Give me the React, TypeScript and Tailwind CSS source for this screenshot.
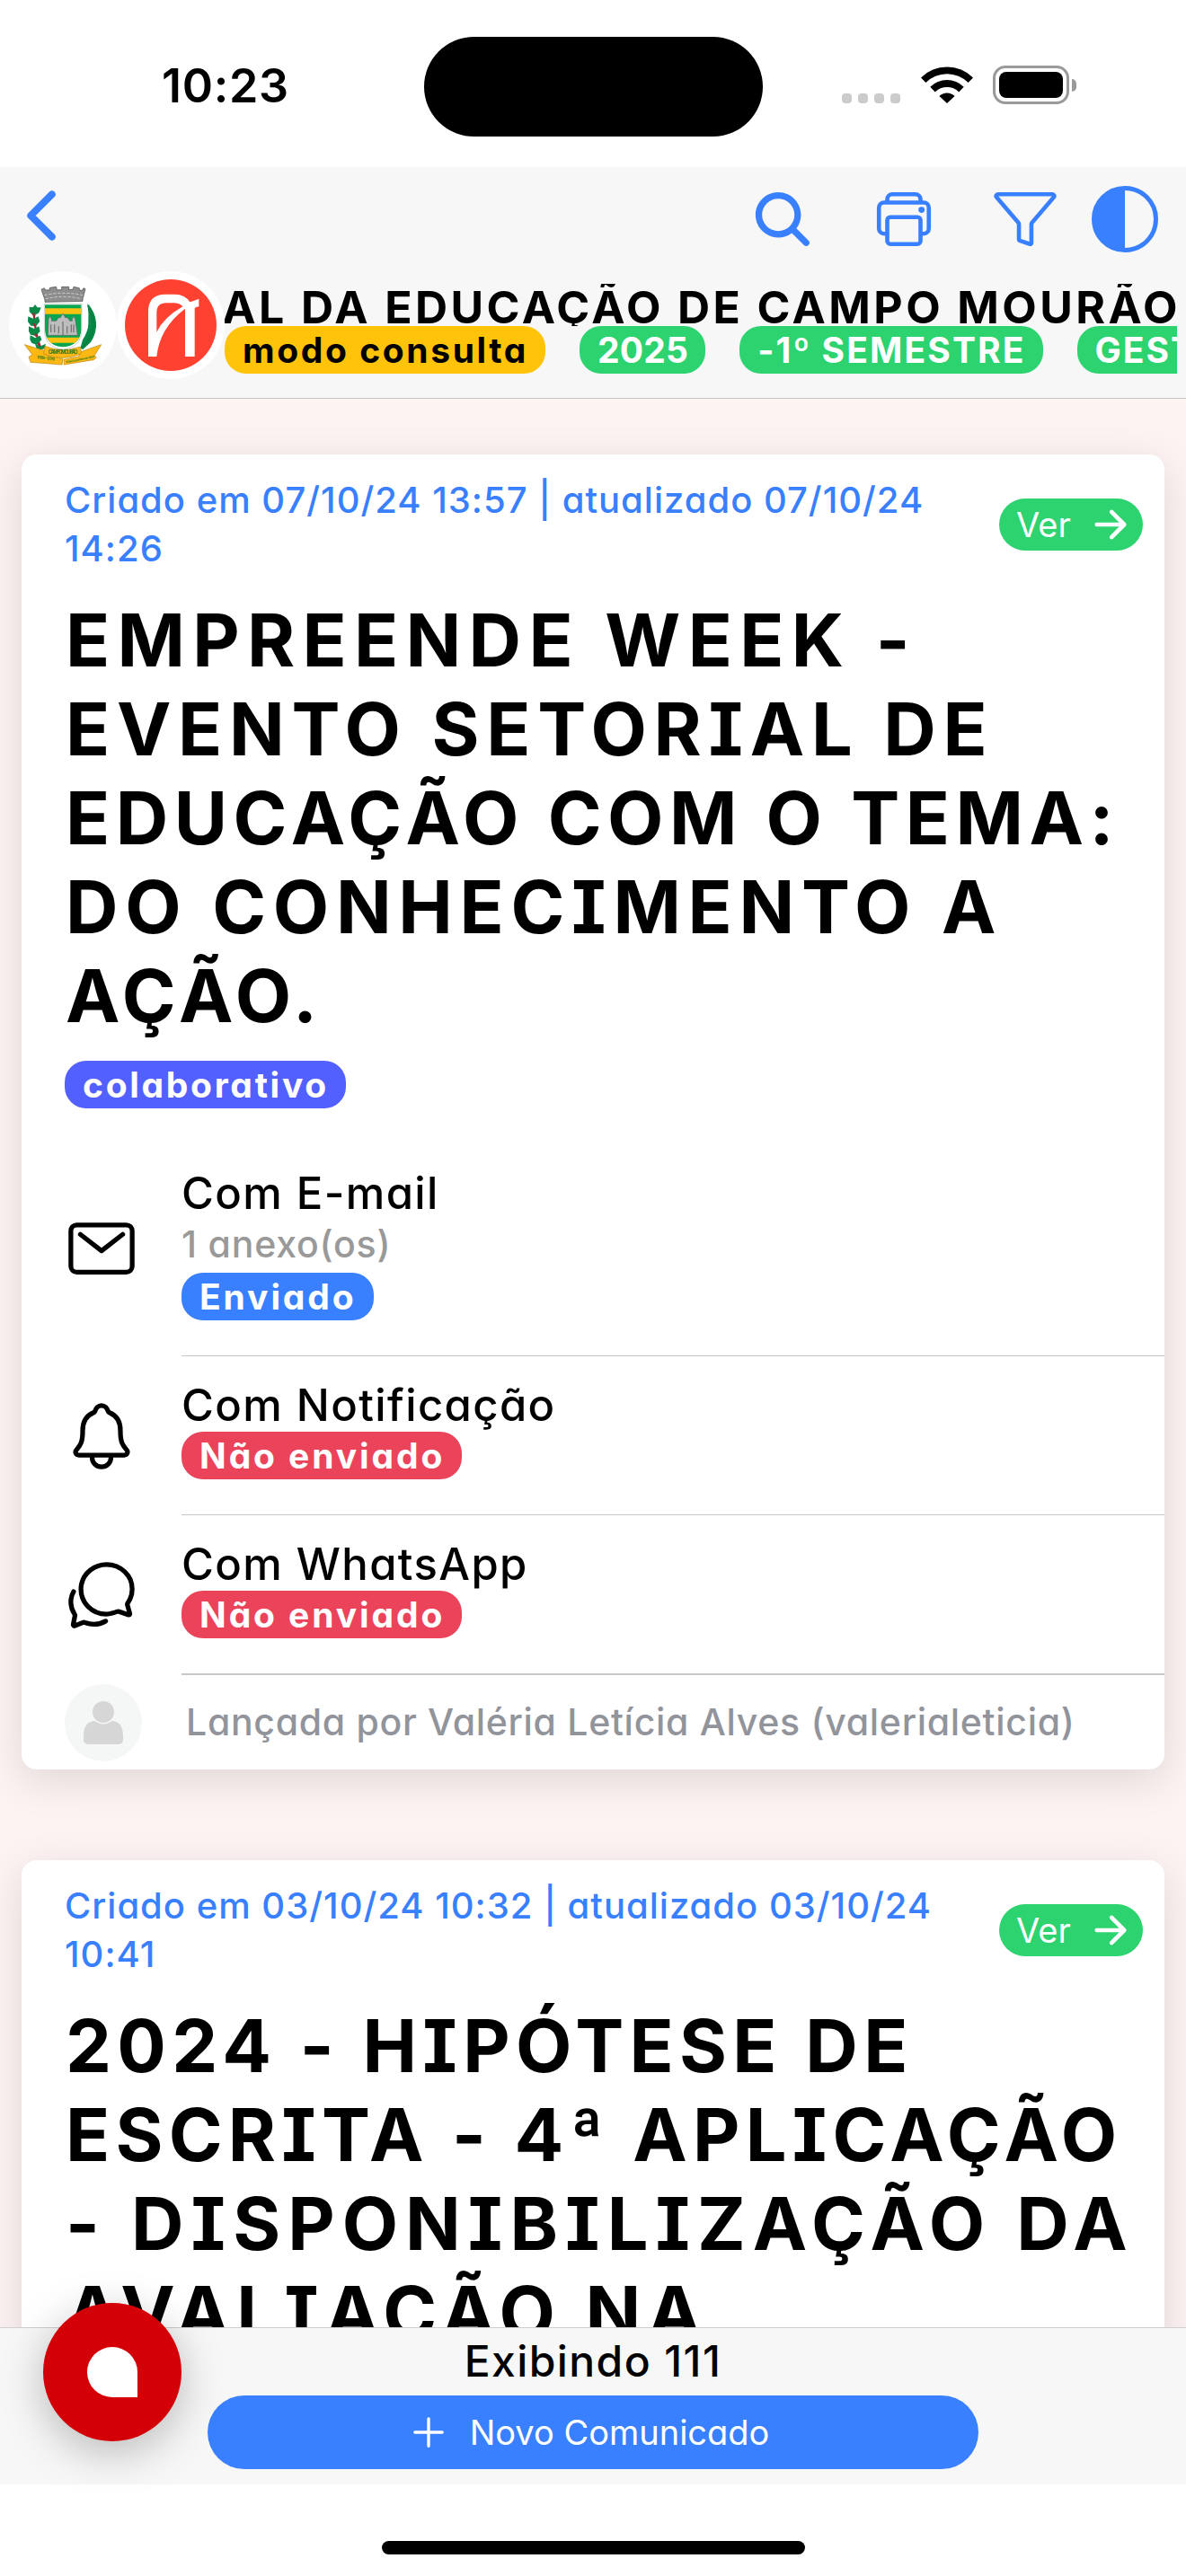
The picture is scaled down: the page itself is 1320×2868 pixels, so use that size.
import { ReactNode } from "react";
import {
	IoAdd,
	IoArrowForward,
	IoChatbubblesOutline,
	IoChevronBack,
	IoFunnelOutline,
	IoMailOutline,
	IoNotificationsOutline,
	IoPrintOutline,
	IoSearch,
} from "react-icons/io5";

type TitleLine = { text: string; spacing: string };

const channels = [
	{ icon: <IoMailOutline size={84} />, title: "Com E-mail", note: "1 anexo(os)", status: "Enviado", sent: true },
	{ icon: <IoNotificationsOutline size={84} />, title: "Com Notificação", note: "", status: "Não enviado", sent: false },
	{ icon: <IoChatbubblesOutline size={84} />, title: "Com WhatsApp", note: "", status: "Não enviado", sent: false },
];

const firstTitle = [
	{ text: "EMPREENDE WEEK -", spacing: "tracking-[8.3px]" },
	{ text: "EVENTO SETORIAL DE", spacing: "tracking-[7.7px]" },
	{ text: "EDUCAÇÃO COM O TEMA:", spacing: "tracking-[6.5px]" },
	{ text: "DO CONHECIMENTO A", spacing: "tracking-[7.7px]" },
	{ text: "AÇÃO.", spacing: "tracking-[5.6px]" },
];

const secondTitle = [
	{ text: "2024 - HIPÓTESE DE", spacing: "tracking-[6.3px]" },
	{ text: "ESCRITA - 4ª APLICAÇÃO", spacing: "tracking-[6.2px]" },
	{ text: "- DISPONIBILIZAÇÃO DA", spacing: "tracking-[8px]" },
	{ text: "AVALIAÇÃO NA", spacing: "tracking-[7.2px]" },
];

function StatusBar() {
	return (
		<div className="flex h-[186px] shrink-0 bg-white">
			<div className="w-[472px] pt-[66px] pl-[180px] text-[52px] leading-[60px] font-semibold tracking-[0.7px]">10:23</div>
			<div className="mt-[41px] h-[111px] w-[377px] rounded-full bg-black" />
			<div className="flex flex-1 pt-[73px] pl-[88px]">
				<div className="mt-[31px] flex h-[11px] gap-[7px]">
					<i className="w-[11px] rounded-[4px] bg-[#cbcbcb]" />
					<i className="w-[11px] rounded-[4px] bg-[#cbcbcb]" />
					<i className="w-[11px] rounded-[4px] bg-[#cbcbcb]" />
					<i className="w-[11px] rounded-[4px] bg-[#cbcbcb]" />
				</div>
				<svg className="ml-[23px]" width="58" height="42" viewBox="0 0 58 42">
					<path d="M0 13.500a41 41 0 0 1 58 0l-5.400 5.600a33.300 33.300 0 0 0-47.200 0z" />
					<path d="M10.300 23.800a26.500 26.500 0 0 1 37.400 0l-5.500 5.600a18.700 18.700 0 0 0-26.400 0z" />
					<path d="M20.400 34a12.200 12.200 0 0 1 17.200 0L29 42z" />
				</svg>
				<div className="ml-[22px] h-[43px] w-[85px] rounded-[14px] border-[3px] border-[#9a9a9a] p-[4px]">
					<div className="h-full rounded-[8px] bg-black" />
				</div>
				<div className="mt-[15px] ml-[3px] h-[14px] w-[5px] rounded-r-full bg-[#9a9a9a]" />
			</div>
		</div>
	);
}

function Crest() {
	return (
		<svg width="120" height="120" viewBox="0 0 360 360">
			<circle cx="180" cy="180" r="180" fill="#fff" />
			<path d="M108 61l10-5 4 7 14-1v-7l22-3 2 10h16V52h24v9h13l3-9 19 4v7l9 1 5-8 6 3-9 34v7l-126 3v-7z" fill="#8d8d8d" stroke="#444" strokeWidth="2" />
			<path d="M118 80q66-14 128 0M122 92q60-14 120 0" fill="none" stroke="#ccc" strokeWidth="3" strokeDasharray="10 5" />
			<path d="M118 108h125v85q0 62-63 68-62-6-62-68z" fill="#fff" stroke="#777" />
			<path d="M120 112h121v79q0 56-61 62-60-6-60-62z" fill="#07a651" />
			<path d="M120 124h121v19H120zM125 221h110l-14 18h-82z" fill="#ffc20e" />
			<path d="M132 160l5-10 5 10v6h16l7-11 7 0 8-14 8 14 8 0 7 11h8v-6l5-10 5 10 8 54H130z" fill="#bdbdbd" stroke="#666" strokeWidth="2" />
			<path d="M140 178v26m12-26v26m14-20v24m14-40v46m14-30v24m14-30v26m8-26v26" stroke="#777" strokeWidth="4" />
			<path d="M82 120q2 76 24 140" stroke="#9d2a35" strokeWidth="7" fill="none" />
			<g fill="#078a48">
				<path d="M68 119l12 2 7-10 8 10 12 0-7 18-18 10-14-14zM64 151l18 8 16-8 5 16-12 16-18-1-10-14zM66 184l18 8 16-8 4 16-14 16-18-4-6-12zM71 214l17 9 16-8 5 14-16 16-17-5-6-12zM87 242l19 8 17-8-5 17-12 3-14-4z" />
				<path d="M262 108q26 28 29 62t-18 67l-26 24-9-4 8-28q18-28 19-52 2-38-3-69z" />
			</g>
			<path d="M80 140l6 10m-4 24l5 10m0 24l5 10m4 22l8 10" fill="none" stroke="#9d2a35" strokeWidth="7" />
			<path d="M264 114q44 76-20 140" fill="none" stroke="#067a3e" strokeWidth="8" strokeDasharray="3 3" />
			<g fill="#fdb813" stroke="#b98512" strokeWidth="2">
				<path d="M52 245l72 22 2 14 54 12-3 19-105-8-6-18 12-7z" />
				<path d="M308 245l-68 24-8 16-49 10 1 17 98-16 10-7-6-8z" />
				<path d="M120 250q60 24 118 2l4 23q-62 28-126 1z" />
			</g>
			<text x="180" y="277" textAnchor="middle" fontSize="17" fontWeight="700" fill="#3a7d1e" textLength="98">CAMPO MOURÃO</text>
			<text x="92" y="291" fontSize="14" fontWeight="700" fill="#3a7d1e" textLength="60" transform="rotate(8 92 291)">1769 - 1779</text>
			<text x="190" y="307" fontSize="10" fontWeight="700" fill="#3a7d1e" textLength="98" transform="rotate(-11 190 307)">10 de Dezembro de 1947</text>
		</svg>
	);
}

function AppLogo() {
	return (
		<svg width="120" height="120" viewBox="0 0 360 360">
			<circle cx="180" cy="180" r="180" fill="#fff" />
			<circle cx="180" cy="180" r="153" fill="#ff4132" />
			<path d="M105 285h28q10-96 95-160v160h32V124q2-4 14-6V92l-18 7-12 4q-16-26-50-26h-32q-57 0-57 58zM133 203v-64q0-33 32-33h24q22 0 31 12-63 36-87 85z" fill="#fff" fillRule="evenodd" />
		</svg>
	);
}

function Badge({ color, spacing = "tracking-[2.9px]", children }: { color: string; spacing?: string; children: ReactNode }) {
	return (
		<span className={"flex h-[53px] w-fit shrink-0 items-center rounded-[24px] pr-[19px] pl-[20px] text-[39px] leading-none font-bold whitespace-nowrap " + color + " " + spacing}>
			{children}
		</span>
	);
}

function Header() {
	return (
		<div className="h-[258px] shrink-0 border-b border-[#c4c4c6] bg-[#f7f7f7]">
			<div className="flex h-[116px] items-center text-[#3880ff]">
				<IoChevronBack className="mt-[-8px] ml-[4px]" size={84} />
				<div className="ml-auto flex items-center gap-[61px] pr-[31px]">
					<IoSearch size={74} />
					<IoPrintOutline size={74} />
					<div className="flex items-center gap-[37px]">
						<IoFunnelOutline size={74} />
						<svg width="74" height="74" viewBox="0 0 74 74">
							<circle cx="37" cy="37" r="34.500" fill="none" stroke="currentColor" strokeWidth="5" />
							<path d="M37 1a36 36 0 0 0 0 72z" fill="currentColor" />
						</svg>
					</div>
				</div>
			</div>
			<div className="flex pl-[10px]">
				<Crest />
				<AppLogo />
				<div className="mt-[14px] w-[1060px] overflow-hidden">
					<div className="flex h-[47px] justify-end overflow-hidden text-[50px] leading-[52px] font-bold tracking-[3.4px] whitespace-nowrap">
						<span className="mr-[-4px]">CENTRAL DA EDUCAÇÃO DE CAMPO MOURÃO</span>
					</div>
					<div className="flex gap-[38px] text-white">
						<Badge color="bg-[#ffc409] text-black" spacing="tracking-[2.6px]">modo consulta</Badge>
						<Badge color="bg-[#2dd36f]" spacing="tracking-[0.2px]">2025</Badge>
						<Badge color="bg-[#2dd36f]" spacing="tracking-[2.1px]">-1º SEMESTRE</Badge>
						<Badge color="bg-[#2dd36f]" spacing="tracking-[2px]">GESTÃO</Badge>
					</div>
				</div>
			</div>
		</div>
	);
}

function CardTop({ created, title }: { created: string[]; title: TitleLine[] }) {
	return (
		<>
			<div className="flex items-center justify-between pt-[24px] pr-[24px] pl-[48px]">
				<p className="text-[40px] leading-[54px] font-[450] tracking-[1px] whitespace-pre text-[#3880ff]">{created.join("\n")}</p>
				<button className="flex h-[58px] w-[160px] items-center justify-between rounded-full bg-[#2dd36f] pr-[11px] pl-[19px] text-[38px] text-white">
					Ver
					<IoArrowForward size={50} />
				</button>
			</div>
			<h2 className="mt-[26px] pl-[49px] text-[81px] leading-[99px] font-bold whitespace-nowrap">
				{title.map((line) => (
					<span className={"block " + line.spacing} key={line.text}>{line.text}</span>
				))}
			</h2>
		</>
	);
}

function Channels() {
	return channels.map((channel, i) => (
		<div className="flex items-center pl-[47px]" key={channel.title}>
			<div className="w-[131px]">{channel.icon}</div>
			<div className={(channel.note ? "pt-[29px] " : "pt-[25px] ") + (i === 2 ? "border-b-2 " : "border-b ") + "flex-1 border-[#c8c7cc] pb-[39px]"}>
				<p className="h-[59px] text-[49px] leading-[60px] font-[450] tracking-[1.4px]">{channel.title}</p>
				{channel.note && <p className="mb-[4px] text-[41px] leading-[55px] font-[450] tracking-[0.8px] text-[#999999]">{channel.note}</p>}
				<Badge color={channel.sent ? "bg-[#3880ff] text-white" : "bg-[#eb445a] text-white"}>{channel.status}</Badge>
			</div>
		</div>
	));
}

function Author() {
	return (
		<div className="flex h-[105px] items-center pl-[48px] text-[41px] font-[450] tracking-[0.7px] text-[#92949c]">
			<svg className="mr-[49px]" width="86" height="86" viewBox="0 0 86 86">
				<circle cx="43" cy="43" r="43" fill="#f5f7f6" />
				<circle cx="43" cy="31" r="12" fill="#d6d6d6" />
				<path d="M33 41q10 7 20 0 12 1 12 17v4q0 5-6 5H27q-6 0-6-5v-4q0-16 12-17z" fill="#d6d6d6" />
			</svg>
			Lançada por Valéria Letícia Alves (valerialeticia)
		</div>
	);
}

export default function App() {
	return (
		<div className="relative flex h-[2868px] w-[1320px] flex-col overflow-hidden bg-white font-['Inter',sans-serif] text-black [font-feature-settings:'cv11','cv08']">
			<StatusBar />
			<Header />
			<div className="h-[2147px] overflow-hidden bg-[#fdf3f2] px-[24px] pt-[62px]">
				<div className="h-[1464px] rounded-[17px] bg-white shadow-[0_12px_48px_rgba(0,0,0,0.12)]">
					<CardTop created={["Criado em 07/10/24 13:57 | atualizado 07/10/24", "14:26"]} title={firstTitle} />
					<div className="mt-[22px] mb-[36px] pl-[48px]">
						<Badge color="bg-[#5260ff] text-white" spacing="tracking-[2.7px]">colaborativo</Badge>
					</div>
					<Channels />
					<Author />
				</div>
				<div className="mt-[101px] h-[1464px] rounded-[17px] bg-white shadow-[0_12px_48px_rgba(0,0,0,0.12)]">
					<CardTop created={["Criado em 03/10/24 10:32 | atualizado 03/10/24", "10:41"]} title={secondTitle} />
				</div>
			</div>
			<div className="flex h-[175px] flex-col items-center border-t border-[#cfcfd0] bg-[#f7f7f7]">
				<p className="pt-[7px] text-[48px] leading-[60px] font-[450] tracking-[1.4px]">Exibindo 111</p>
				<button className="mt-[8px] flex h-[82px] w-[858px] items-center justify-center rounded-full bg-[#3880ff] pr-[14px] text-[38px] text-white">
					<IoAdd className="mr-[19px]" size={54} />
					Novo Comunicado
				</button>
			</div>
			<div className="flex flex-1 justify-center bg-white pt-[63px]">
				<div className="h-[15px] w-[471px] rounded-full bg-black" />
			</div>
			<button className="absolute top-[2564px] left-[48px] flex size-[154px] items-center justify-center rounded-full bg-[#d40008] shadow-[0_12px_48px_rgba(0,0,0,0.25)]">
				<span className="size-[56px] rounded-t-full rounded-bl-full bg-white" />
			</button>
		</div>
	);
}
